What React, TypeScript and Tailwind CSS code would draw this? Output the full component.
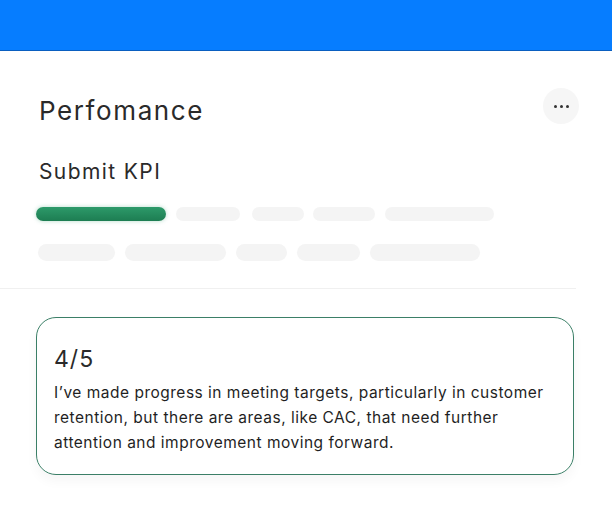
export default function App() {
  const row1 = [
    { w: 64, ml: 10 },
    { w: 52, ml: 12 },
    { w: 62, ml: 9 },
    { w: 109, ml: 10 },
  ];
  const row2 = [77, 101, 51, 63, 110];

  return (
    <div className="w-[612px] h-[508px] bg-white overflow-hidden" style={{ fontFamily: "Inter, 'Open Sans', sans-serif" }}>
      <div className="h-[51px] bg-[#067dff] border-b border-[#0a5fc0]" />

      <div className="pt-[45px] px-[39px] flex items-start justify-between">
        <h1 className="text-[26px] tracking-[1.6px] text-[#2a2a2a] leading-[30px]">Perfomance</h1>
        <button className="w-9 h-9 -mt-[8px] -mr-[6px] rounded-full bg-[#f6f6f6] flex items-center justify-center gap-[3px]">
          <span className="w-[3px] h-[3px] rounded-full bg-[#333]" />
          <span className="w-[3px] h-[3px] rounded-full bg-[#333]" />
          <span className="w-[3px] h-[3px] rounded-full bg-[#333]" />
        </button>
      </div>

      <div className="px-[39px] pt-[33px]">
        <h2 className="text-[21px] tracking-[1.4px] text-[#2a2a2a] leading-[26px]">Submit KPI</h2>
      </div>

      <div className="pl-[36px] pt-[22px] flex items-center">
        <div className="w-[130px] h-[14px] rounded-full bg-gradient-to-b from-[#2d9a6a] to-[#1d7d52] shadow-[0_0_4px_rgba(40,150,100,0.35)]" />
        {row1.map((p, i) => (
          <div key={i} className="h-[14px] rounded-full bg-[#f4f4f4]" style={{ width: p.w, marginLeft: p.ml }} />
        ))}
      </div>
      <div className="pl-[38px] pt-[23px] flex items-center gap-[10px]">
        {row2.map((w, i) => (
          <div key={i} className="h-[17px] rounded-full bg-[#f4f4f4]" style={{ width: w }} />
        ))}
      </div>

      <div className="mt-[27px] w-[576px] h-px bg-[#f0f0f0]" />

      <div className="px-[36px] pt-[28px]">
        <div className="w-[538px] h-[158px] rounded-[20px] border-[1.5px] border-[#3b7f67] pl-[17px] pr-[8px] pt-[28px] shadow-[0_6px_12px_rgba(0,0,0,0.04)]">
          <div className="text-[23px] tracking-[1px] text-[#2a2a2a] leading-[26px]">4/5</div>
          <p className="mt-[8px] text-[15.5px] tracking-[0.5px] leading-[25px] text-[#1f1f1f]">
            I’ve made progress in meeting targets, particularly in customer retention, but there are areas, like CAC, that need further attention and improvement moving forward.
          </p>
        </div>
      </div>
    </div>
  );
}
